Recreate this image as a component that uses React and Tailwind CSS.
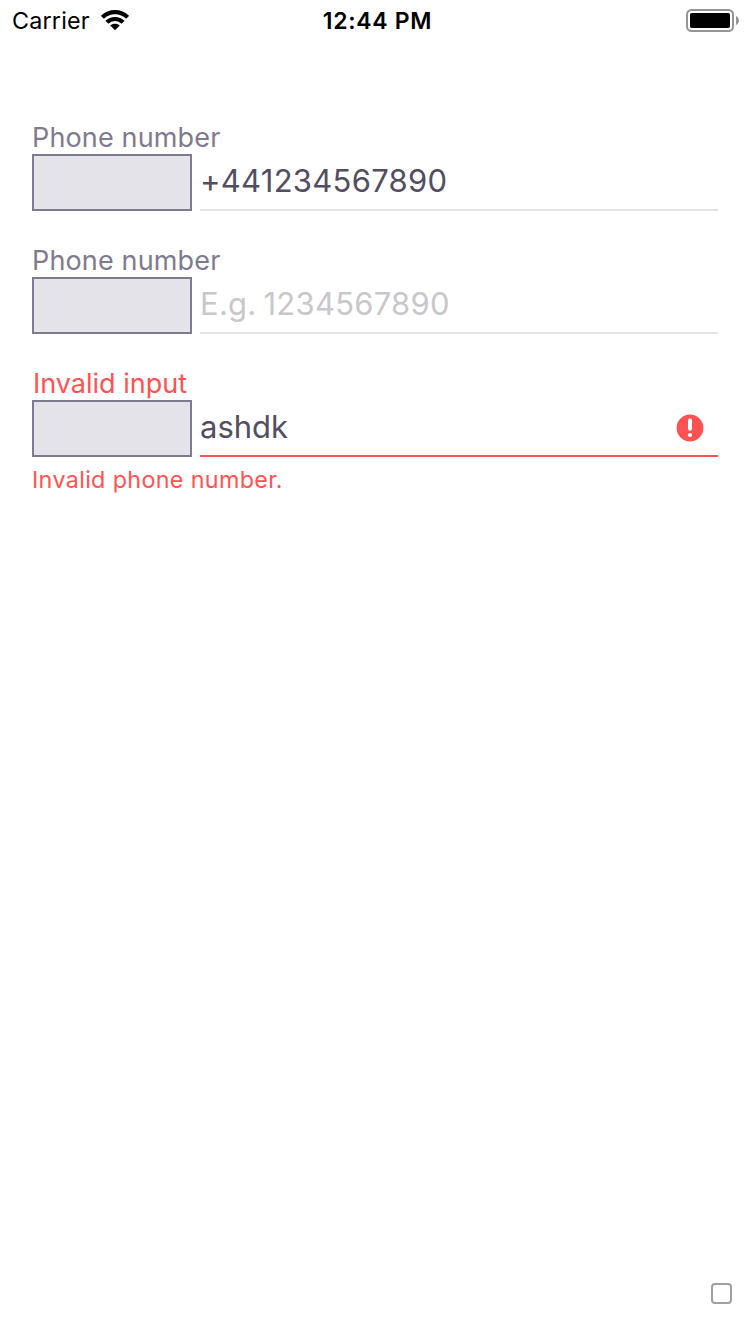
import React from "react";

function StatusBar() {
  return (
    <header className="grid h-10 grid-cols-3 items-center pl-3 pr-[11px] text-black">
      <div className="flex items-center gap-[11px]">
        <span className="whitespace-nowrap pt-0.5 text-[23.3px] leading-7 tracking-[0.2px]">Carrier</span>
        <svg className="h-5 w-7" viewBox="0 0 28 20" fill="none" stroke="#000" strokeWidth="4.2">
          <path d="M1.4 7.3C8.3 0.4 19.7 0.4 26.6 7.3" />
          <path d="M5.9 12.2C10.3 7.9 17.7 7.9 22.1 12.2" />
          <path d="M14 20.2L9.2 15.6C11.9 13 16.1 13 18.8 15.6Z" fill="#000" stroke="none" />
        </svg>
      </div>
      <span className="whitespace-nowrap pl-1 pt-0.5 text-center text-[23px] font-semibold leading-7 tracking-[0.7px]">12:44 PM</span>
      <svg className="h-6 w-[53px] justify-self-end" viewBox="0 0 53 24" fill="none">
        <rect x="1" y="2" width="46" height="21" rx="4.5" stroke="#949494" strokeWidth="2" />
        <rect x="4" y="5" width="40" height="15" rx="1.8" fill="#000" />
        <path d="M50 8C53.9 9.8 53.9 15.2 50 17Z" fill="#949494" />
      </svg>
    </header>
  );
}

function PhoneField({ label, value, placeholder, error }) {
  return (
    <div>
      <div className={error ? "h-[33px] pl-px text-[27px] leading-[33px] text-[#ff5252]" : "h-[33px] text-[27px] leading-[33px] tracking-[0.15px] text-[#7f7a8f]"}>
        {label}
      </div>
      <div className="flex h-[57px] gap-2">
        <div className="w-40 border-2 border-[#7f7a8f] bg-[#e4e3ea]" />
        <div
          className={
            error
              ? "flex flex-1 items-center justify-between border-b-2 border-[#ff5252] pr-3.5"
              : "flex flex-1 items-center justify-between border-b-2 border-[#e4e3ea] pr-3.5"
          }
        >
          <span
            className={
              placeholder
                ? "pb-0.5 text-[31px] leading-[38px] tracking-[0.25px] [word-spacing:-2px] text-[#c7c7cc]"
                : error
                  ? "pb-0.5 text-[31px] leading-[38px] text-[#524d61]"
                  : "pb-0.5 text-[31px] leading-[38px] tracking-[0.27px] text-[#524d61]"
            }
          >
            {value || placeholder}
          </span>
          {error && (
            <svg className="h-7 w-7" viewBox="0 0 28 28">
              <circle cx="14" cy="14" r="13.4" fill="#ff5252" />
              <path d="M14 6.5V14.8" stroke="#fff" strokeWidth="4" strokeLinecap="round" />
              <circle cx="14" cy="21" r="2.1" fill="#fff" />
            </svg>
          )}
        </div>
      </div>
      {error && <p className="mt-2 text-[23.3px] leading-[30px] tracking-[0.35px] text-[#ff5252]">{error}</p>}
    </div>
  );
}

export default function App() {
  return (
    <div className="flex h-[1334px] w-[750px] flex-col bg-white font-['Inter',sans-serif]">
      <StatusBar />
      <main className="flex flex-1 flex-col gap-[33px] px-8 pt-[81px]">
        <PhoneField label="Phone number" value="+441234567890" />
        <PhoneField label="Phone number" placeholder="E.g. 1234567890" />
        <PhoneField label="Invalid input" value="ashdk" error="Invalid phone number." />
      </main>
      <footer className="flex justify-end pb-[30px] pr-[18px]">
        <div className="h-[21px] w-[21px] rounded-[4px] border-2 border-[#a0a0a0]" />
      </footer>
    </div>
  );
}
